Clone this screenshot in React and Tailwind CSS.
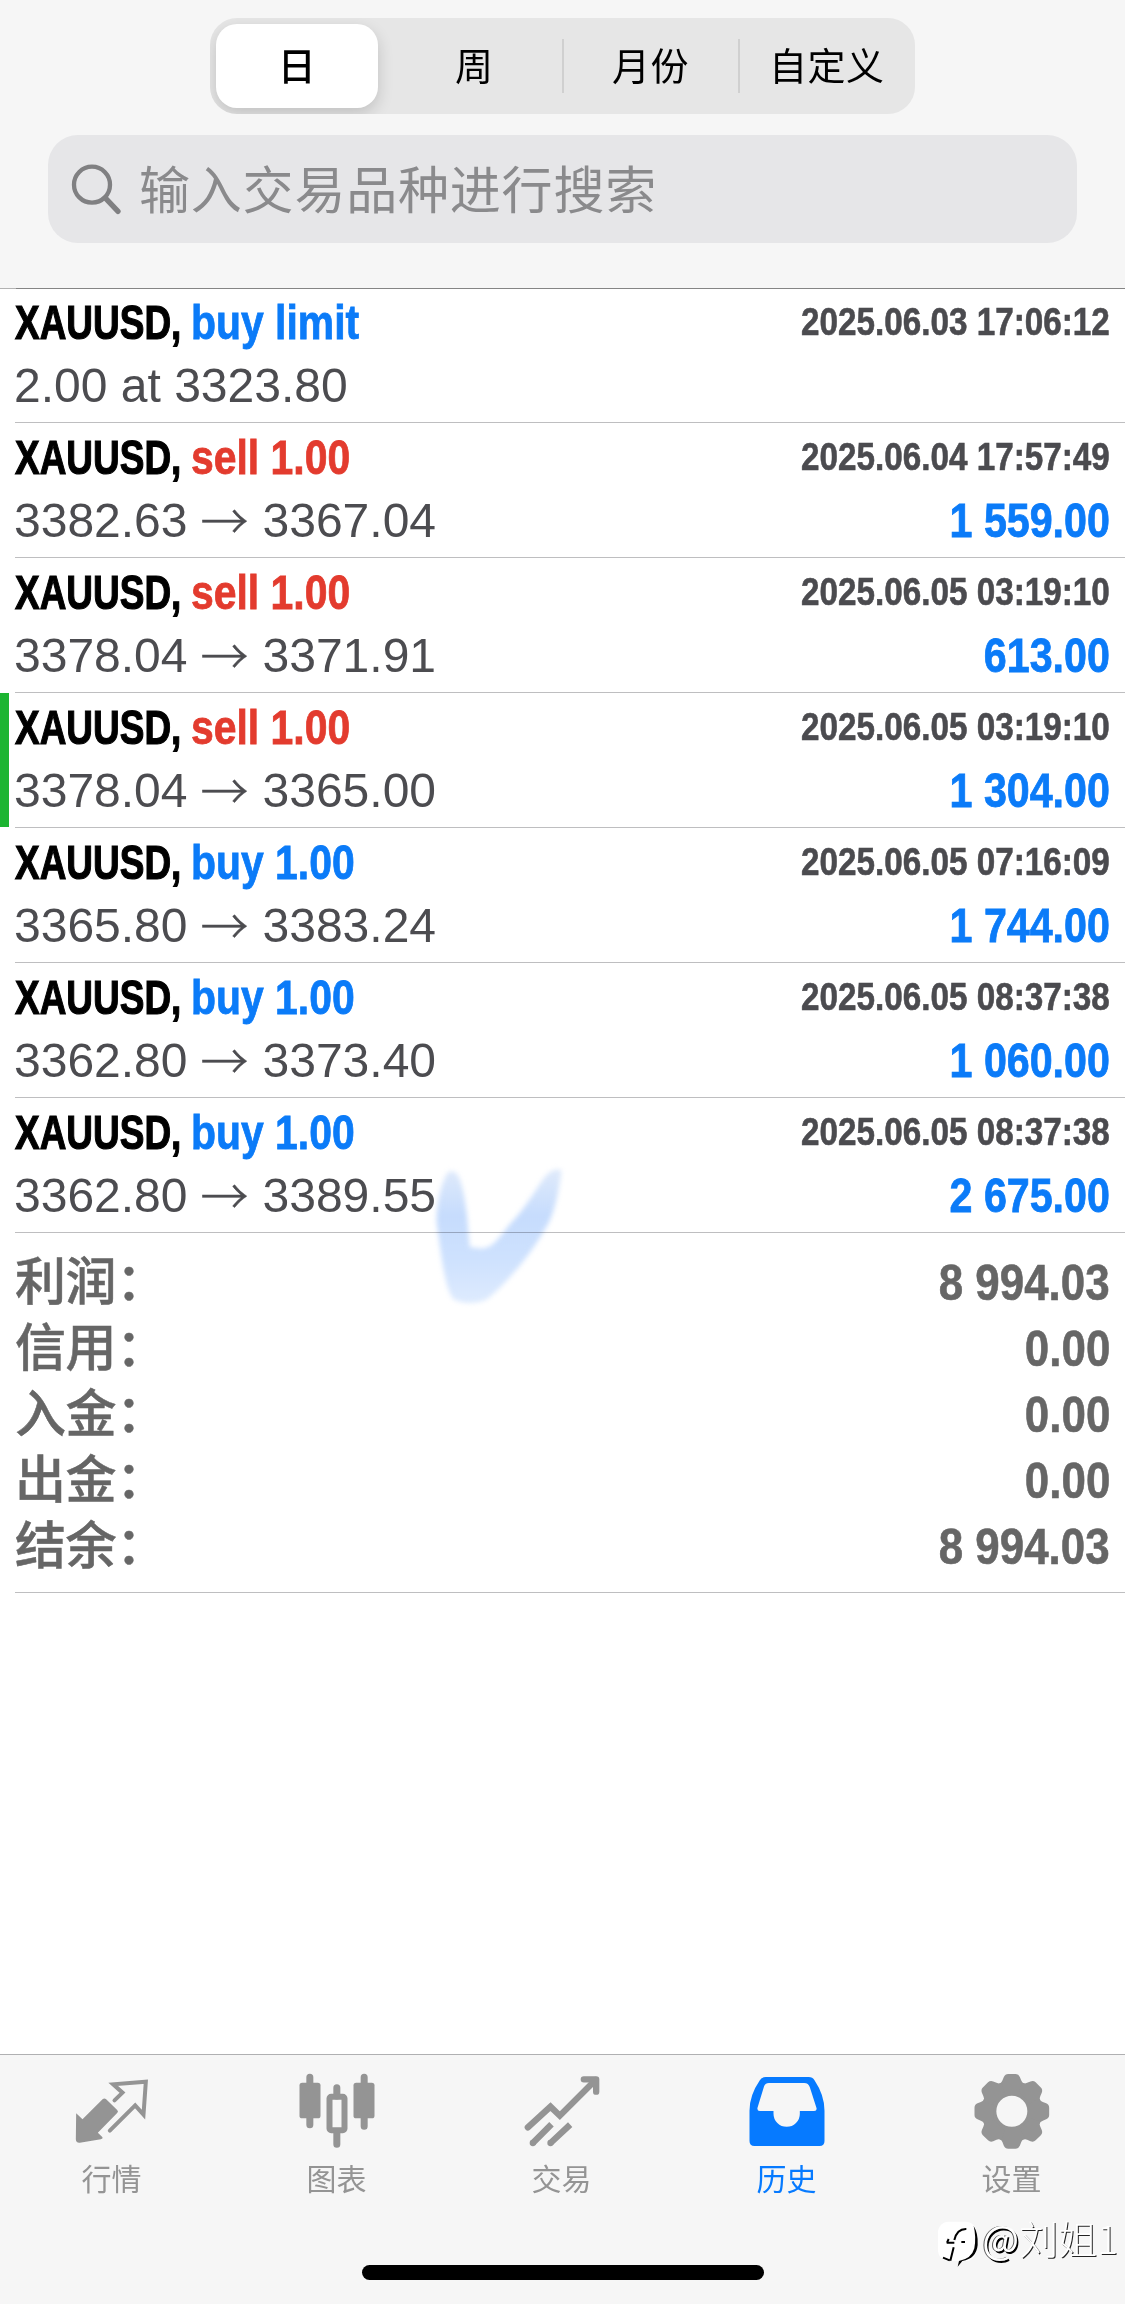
import React from 'react';

const periods = ['日', '周', '月份', '自定义'];

const deals = [
  { type: 'buy limit', side: 'buy', time: '2025.06.03 17:06:12', volume: '2.00 at 3323.80' },
  { type: 'sell 1.00', side: 'sell', time: '2025.06.04 17:57:49', open: '3382.63', close: '3367.04', profit: '1 559.00' },
  { type: 'sell 1.00', side: 'sell', time: '2025.06.05 03:19:10', open: '3378.04', close: '3371.91', profit: '613.00' },
  { type: 'sell 1.00', side: 'sell', time: '2025.06.05 03:19:10', open: '3378.04', close: '3365.00', profit: '1 304.00', marked: true },
  { type: 'buy 1.00', side: 'buy', time: '2025.06.05 07:16:09', open: '3365.80', close: '3383.24', profit: '1 744.00' },
  { type: 'buy 1.00', side: 'buy', time: '2025.06.05 08:37:38', open: '3362.80', close: '3373.40', profit: '1 060.00' },
  { type: 'buy 1.00', side: 'buy', time: '2025.06.05 08:37:38', open: '3362.80', close: '3389.55', profit: '2 675.00' },
];

const summary = [
  { label: '利润：', value: '8 994.03' },
  { label: '信用：', value: '0.00' },
  { label: '入金：', value: '0.00' },
  { label: '出金：', value: '0.00' },
  { label: '结余：', value: '8 994.03' },
];

const QuotesIcon = () => (
  <svg className="size-[76px] overflow-visible" viewBox="223.5 102 228 228" fill="none" stroke="currentColor" strokeLinejoin="round" strokeLinecap="round">
    <path d="M227 220 L246 238 L307 177 Q312 173 317 178 L350 210 Q355 215 350 219 L292 278 L306 292 Q308 297 301 298 L238 308 Q226 309 226 298 Z" fill="currentColor" stroke="none" />
    <path d="M342 181 L366 158 L338 133 L436 125 L429 224 L404 196 L328 272" strokeWidth="12" strokeLinejoin="miter" />
  </svg>
);

const ChartIcon = () => (
  <svg className="size-[76px] overflow-visible" viewBox="898.5 102 228 228" fill="none" stroke="currentColor" strokeLinecap="round">
    <path d="M928 112 V254 M1091 112 V259 M1009 143 V168 M1009 275 V313" strokeWidth="21" />
    <rect x="897" y="128" width="63" height="107" rx="8" fill="currentColor" stroke="none" />
    <rect x="1059" y="128" width="63" height="107" rx="8" fill="currentColor" stroke="none" />
    <rect x="987" y="170.500" width="45" height="100" rx="5" strokeWidth="18" />
  </svg>
);

const TradeIcon = () => (
  <svg className="size-[76px] overflow-visible" viewBox="133.5 102 228 228" fill="none" stroke="currentColor" strokeWidth="19">
    <path d="M142 262 L210 200 L238 227 L345 120" strokeLinecap="round" />
    <path d="M310 118 H347 V155" strokeLinecap="round" strokeLinejoin="round" />
    <path d="M157 309 L213 253 M210 309 L269 254" />
    <path d="M157 309 h.1 M210 309 h.1" strokeLinecap="round" />
  </svg>
);

const HistoryIcon = () => (
  <svg className="size-[76px] overflow-visible" viewBox="808.5 102 228 228" fill="currentColor">
    <path fillRule="evenodd" d="M856 111 H985 Q996 111 1002 121 Q1032 166 1032 212 V303 Q1032 318 1017 318 H822 Q807 318 807 303 V212 Q807 166 838 121 Q844 111 856 111 Z M865 129 Q855 129 851 138 L831 203 Q829 213 838 213 H879 V221 A39.500 39.500 0 0 0 958 221 V213 H1001 Q1010 213 1008 204 L988 142 Q984 129 971 129 Z" />
  </svg>
);

const gearAngles = [0, 45, 90, 135, 180, 225, 270, 315];

const SettingsIcon = () => (
  <svg className="size-[76px] overflow-visible" viewBox="223.5 102 228 228" fill="currentColor">
    <circle cx="334" cy="214" r="69" fill="none" stroke="currentColor" strokeWidth="45" />
    {gearAngles.map((a) => (
      <path key={a} d="M296 134 Q302 131 306 121 L310 111 Q314 102 323 102 H345 Q354 102 358 111 L362 121 Q366 131 372 134 L360 158 H308 Z" transform={`rotate(${a} 334 214)`} />
    ))}
  </svg>
);

const tabs = [
  { label: '行情', Icon: QuotesIcon },
  { label: '图表', Icon: ChartIcon },
  { label: '交易', Icon: TradeIcon },
  { label: '历史', Icon: HistoryIcon, active: true },
  { label: '设置', Icon: SettingsIcon },
];

const Header = () => (
  <header className="h-[288px] bg-[#f6f6f6] pt-[18px] font-['Noto_Sans_CJK_SC',sans-serif]">
    <div className="mx-auto flex h-24 w-[705px] overflow-hidden rounded-[27px] bg-[#e6e6e6] text-[38px] text-black">
      {periods.map((p, i) => (
        <div key={p} className={`flex w-1/4 items-center ${i === 0 ? 'py-1.5 pr-2 pl-1.5' : ''}`}>
          <div
            className={
              i === 0
                ? 'flex h-full flex-1 items-center justify-center rounded-[21px] bg-white font-medium shadow-[0_6px_16px_rgba(0,0,0,0.16)]'
                : 'flex h-full flex-1 items-center justify-center whitespace-nowrap'
            }
          >
            <span className="relative -top-[3px] tracking-[0.5px]">{p}</span>
          </div>
          {(i === 1 || i === 2) && <div className="-mr-px -ml-px h-[54px] w-0.5 bg-[#d0d0d0]" />}
        </div>
      ))}
    </div>
    <div className="mx-[48px] mt-[21px] flex h-[108px] items-center rounded-[30px] bg-[#e6e6e8] pl-[22px] text-[#8a8a8c]">
      <svg className="size-[52px]" viewBox="210 190 156 156" fill="none" stroke="#808082" strokeLinecap="round">
        <circle cx="276" cy="255" r="54" strokeWidth="13" />
        <path d="M317 296 L354 335" strokeWidth="16" />
      </svg>
      <span className="relative -top-0.5 ml-[17px] text-[51px] leading-none tracking-[0.8px]">输入交易品种进行搜索</span>
    </div>
  </header>
);

const Deal = ({ deal, first }) => (
  <div className={first ? 'flex h-[134px]' : 'flex h-[135px]'}>
    <div className="w-[15px] pb-px">{deal.marked && <div className="h-full w-[9px] bg-[#1cb532]" />}</div>
    <div className={`flex-1 border-b border-[#bebec0] pr-[15px] ${first ? 'pt-0.5' : 'pt-[3px]'}`}>
      <div className="flex justify-between text-[48px] font-bold leading-[63px] whitespace-nowrap">
        <div className="flex">
          <div className="w-[176px]">
            <span className="inline-block origin-left scale-x-[0.77] text-black [-webkit-text-stroke:1.2px_currentColor]">XAUUSD,</span>
          </div>
          <span className={`inline-block origin-left scale-x-[0.852] [-webkit-text-stroke:0.8px_currentColor] ${deal.side === 'buy' ? 'text-[#0b7bf8]' : 'text-[#e33b2e]'}`}>{deal.type}</span>
        </div>
        <span className="inline-block origin-right scale-x-[0.875] text-[38px] text-[#4b4b4f] [-webkit-text-stroke:0.6px_currentColor]">{deal.time}</span>
      </div>
      <div className="flex justify-between text-[48px] leading-[63px] whitespace-nowrap">
        <div className="-ml-px flex text-[#4c4c50]">
          {deal.volume ? (
            <span>{deal.volume}</span>
          ) : (
            <>
              <span>{deal.open}</span>
              <span className="relative -top-0.5 mr-3.5 ml-[13px] w-12 font-['Noto_Sans_CJK_SC',sans-serif] font-light [-webkit-text-stroke:0.4px_currentColor]">→</span>
              <span>{deal.close}</span>
            </>
          )}
        </div>
        {deal.profit && <span className="inline-block origin-right scale-x-[0.858] font-bold text-[#0b7bf8] [-webkit-text-stroke:0.8px_currentColor]">{deal.profit}</span>}
      </div>
    </div>
  </div>
);

const Summary = () => (
  <div className="ml-[15px] h-[360px] border-b border-[#bebec0] pt-[17px] pr-[15px] font-bold text-[#666]">
    {summary.map((s) => (
      <div key={s.label} className="flex h-[66px] items-start justify-between leading-[66px]">
        <span className="font-['Liberation_Sans','Noto_Sans_CJK_SC',sans-serif] text-[51px] font-medium tracking-[-0.4px] [-webkit-text-stroke:0.5px_currentColor]">{s.label}</span>
        <span className="inline-block origin-right scale-x-[0.878] text-[50px] [-webkit-text-stroke:0.6px_currentColor]">{s.value}</span>
      </div>
    ))}
  </div>
);

// soft brush tick drawn over the last deal
const BrushTick = () => (
  <svg className="pointer-events-none absolute top-[1140px] left-[400px] h-[190px] w-[200px] mix-blend-multiply blur-[2.5px]" viewBox="0 0 600 570">
    <defs>
      <linearGradient id="brush" x1="0" y1="0" x2="0" y2="1">
        <stop offset="0" stopColor="#dfeafb" />
        <stop offset="0.35" stopColor="#c6dcfd" />
        <stop offset="0.7" stopColor="#cfe2fe" />
        <stop offset="1" stopColor="#deebfe" />
      </linearGradient>
    </defs>
    <path fill="url(#brush)" d="M150 94 C130 100 108 190 110 250 C122 330 132 440 160 478 C190 494 240 492 265 475 C330 420 400 330 430 275 C470 220 478 130 485 92 C475 84 450 88 432 114 C390 175 370 212 330 252 C300 290 280 320 255 324 C240 328 225 322 210 322 C203 270 202 180 178 114 C170 96 160 92 150 94 Z" />
  </svg>
);

const Watermark = () => (
  <div className="absolute top-[2211px] right-[7px] flex items-center font-['Noto_Sans_CJK_SC',sans-serif]">
    <svg className="relative top-[7px] h-[48px] w-[42px]" viewBox="120 540 126 144" fill="none">
      <rect x="123" y="545" width="115" height="118" rx="32" fill="#fff" />
      <path d="M230 558 Q244 580 242 615 Q238 656 196 663 L182 680 L186 663 Q224 656 232 625 Q238 590 230 558 Z" fill="#000" />
      <path d="M208 567 Q180 566 172 600 M149 608 H172 M150 608 L155 597 M170 622 L160 662 M138 653 L158 661 M193 606 H204" stroke="#000" strokeWidth="6" />
    </svg>
    <span className="ml-[3px] text-[39px] leading-[52px] font-light whitespace-nowrap text-white">
      <span className="font-normal [text-shadow:1.5px_1.5px_0_#000,-1px_0_0_#555]">@</span>
      <span className="[text-shadow:1px_1px_0_#222]">刘姐1</span>
    </span>
  </div>
);

const TabBar = () => (
  <nav className="h-[250px] border-t border-[#b0b0b2] bg-[#f6f6f6] font-['Noto_Sans_CJK_SC',sans-serif]">
    <div className="flex h-[210px] pt-[19px]">
      {tabs.map(({ label, Icon, active }) => (
        <div key={label} className={`flex flex-1 flex-col items-center ${active ? 'text-[#067aff]' : 'text-[#949494]'}`}>
          <Icon />
          <span className="mt-[9px] -ml-0.5 text-[30px] leading-9">{label}</span>
        </div>
      ))}
    </div>
    <div className="mx-auto h-[15px] w-[402px] rounded-full bg-black" />
  </nav>
);

const App = () => {
  return (
    <div className="relative flex h-[2304px] w-[1125px] flex-col overflow-hidden bg-white font-['Liberation_Sans',sans-serif]">
      <Header />
      <div className="flex h-px">
        <div className="w-4 bg-[#b2b2b2]" />
        <div className="flex-1 bg-[#858585]" />
      </div>
      <main className="flex-1">
        {deals.map((deal, i) => (
          <Deal key={i} deal={deal} first={i === 0} />
        ))}
        <Summary />
      </main>
      <TabBar />
      <BrushTick />
      <Watermark />
    </div>
  );
};

export default App;
